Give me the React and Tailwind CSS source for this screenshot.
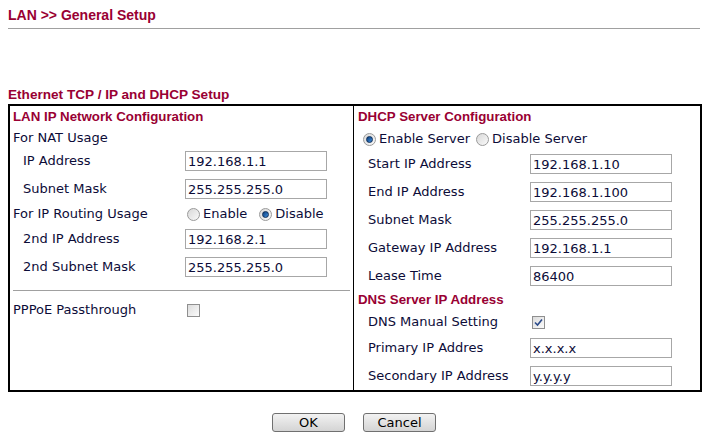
import React from 'react';

const Radio = ({ checked, label }) => (
    <span className="inline-flex items-center">
        <span className="w-[13px] h-[13px] rounded-full border border-[#9a9a9a] bg-gradient-to-br from-[#d8d8d8] to-[#fafafa] flex items-center justify-center mr-[3px]">
            {checked && <span className="w-[7px] h-[7px] rounded-full bg-gradient-to-br from-[#0b3d7a] to-[#3f8fe0] border border-[#0a2a55]" />}
        </span>
        {label}
    </span>
);

const Check = ({ checked }) => (
    <span className="w-[13px] h-[13px] border border-[#8f8f8f] bg-gradient-to-br from-[#dcdcdc] to-[#fbfbfb] flex items-center justify-center">
        {checked && (
            <svg width="9" height="9" viewBox="0 0 9 9">
                <path d="M1 4.5 L3.5 7 L8 1.5" stroke="#2b4a8a" strokeWidth="1.6" fill="none" />
            </svg>
        )}
    </span>
);

const Field = ({ value }) => (
    <div className="w-[142px] h-[20px] border border-[#a7a7a7] bg-white pl-[2px] flex items-center leading-none">
        {value}
    </div>
);

const Row = ({ label, children, h = 'h-[28px]', pl = 'pl-[10px]', lw = 'w-[172px]' }) => (
    <div className={`flex items-center ${h}`}>
        <div className={`${lw} ${pl} shrink-0`}>{label}</div>
        {children}
    </div>
);

const head = "font-['Liberation_Sans',Arial,sans-serif] font-bold text-[13.3px] text-[#990033]";

export default function App() {
    return (
        <div className="w-[708px] h-[437px] bg-white font-['DejaVu_Sans',Verdana,sans-serif] text-[13px] text-[#0c0c38]">
            <div className="px-[8px] pt-[5px]">
                <div className={`${head} text-[14px] h-[18px]`}>LAN &gt;&gt; General Setup</div>
                <div className="h-px bg-[#a0a0a0] mt-[5px]" />
                <div className={`${head} text-[13.6px] mt-[58px] h-[16px] leading-[16px]`}>Ethernet TCP / IP and DHCP Setup</div>
                <div className="flex border-[2px] border-black w-[694px] h-[288px] mt-[1px]">
                    {/* left */}
                    <div className="w-[344px] border-r border-black pl-[3px]">
                        <div className={`${head} h-[22px] flex items-center`}>LAN IP Network Configuration</div>
                        <div className="h-[19px] flex items-center">For NAT Usage</div>
                        <Row label="IP Address"><Field value="192.168.1.1" /></Row>
                        <Row label="Subnet Mask"><Field value="255.255.255.0" /></Row>
                        <Row label="For IP Routing Usage" h="h-[22px]" pl="pl-0">
                            <span className="flex gap-[12px] pl-[2px]">
                                <Radio label="Enable" />
                                <Radio checked label="Disable" />
                            </span>
                        </Row>
                        <Row label="2nd IP Address"><Field value="192.168.2.1" /></Row>
                        <Row label="2nd Subnet Mask"><Field value="255.255.255.0" /></Row>
                        <div className="h-[19px] flex items-center pr-[3px]">
                            <div className="h-px w-full bg-[#a0a0a0]" />
                        </div>
                        <Row label="PPPoE Passthrough" h="h-[20px]" pl="pl-0" lw="w-[174px]">
                            <Check />
                        </Row>
                    </div>
                    {/* right */}
                    <div className="flex-1 pl-[4px]">
                        <div className={`${head} h-[22px] flex items-center`}>DHCP Server Configuration</div>
                        <div className="h-[22px] flex items-center gap-[6px] pl-[5px]">
                            <Radio checked label="Enable Server" />
                            <Radio label="Disable Server" />
                        </div>
                        <Row label="Start IP Address"><Field value="192.168.1.10" /></Row>
                        <Row label="End IP Address"><Field value="192.168.1.100" /></Row>
                        <Row label="Subnet Mask"><Field value="255.255.255.0" /></Row>
                        <Row label="Gateway IP Address"><Field value="192.168.1.1" /></Row>
                        <Row label="Lease Time"><Field value="86400" /></Row>
                        <div className={`${head} h-[20px] flex items-center`}>DNS Server IP Address</div>
                        <Row label="DNS Manual Setting" h="h-[24px]" lw="w-[174px]"><Check checked /></Row>
                        <Row label="Primary IP Addres"><Field value="x.x.x.x" /></Row>
                        <Row label="Secondary IP Address"><Field value="y.y.y.y" /></Row>
                    </div>
                </div>
                <div className="flex justify-center gap-[18px] mt-[21px] font-['DejaVu_Sans',Tahoma,sans-serif] text-[13px] text-black">
                    <button className="w-[73px] h-[19px] border border-[#707070] rounded-[3px] bg-gradient-to-b from-[#f2f2f2] to-[#d4d4d4] leading-none">OK</button>
                    <button className="w-[73px] h-[19px] border border-[#707070] rounded-[3px] bg-gradient-to-b from-[#f2f2f2] to-[#d4d4d4] leading-none">Cancel</button>
                </div>
            </div>
        </div>
    );
}
